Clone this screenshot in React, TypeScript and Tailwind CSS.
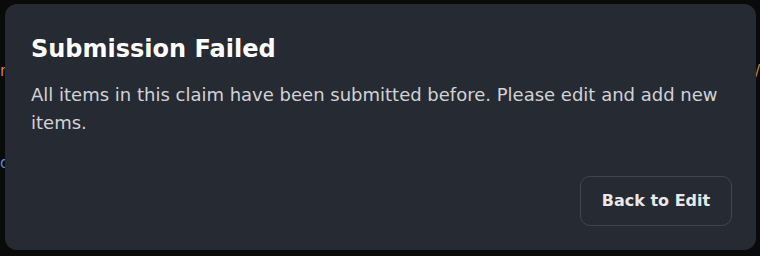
export default function App() {
  return (
    <div
      className="relative h-[256px] w-[760px] overflow-hidden bg-[#0a0a0b] pl-[5px] pt-[4px]"
      style={{ fontFamily: "'DejaVu Sans', 'Noto Sans', sans-serif" }}
    >
      <span className="absolute left-0 top-[60px] text-[15px] text-[#c58a3a]">n</span>
      <span className="absolute left-0 top-[152px] text-[15px] text-[#5a8fd0]">d</span>
      <span className="absolute right-0 top-[60px] text-[15px] text-[#c58a3a]">/</span>
      <div className="relative flex h-[246px] w-[751px] flex-col rounded-[12px] bg-[#262a33] px-[26px] pb-[24px] pt-[30px]">
        <h2 className="text-[24px] font-bold leading-[30px] text-white">Submission Failed</h2>
        <p className="mt-[17px] text-[18px] leading-[28px] text-[#d2d3d6]">
          All items in this claim have been submitted before. Please edit and add new items.
        </p>
        <div className="mt-auto flex justify-end">
          <button className="mr-[-2px] h-[50px] w-[152px] rounded-[10px] border border-[#41454e] text-[16px] font-bold text-[#e8e8ea]">
            Back to Edit
          </button>
        </div>
      </div>
    </div>
  );
}
